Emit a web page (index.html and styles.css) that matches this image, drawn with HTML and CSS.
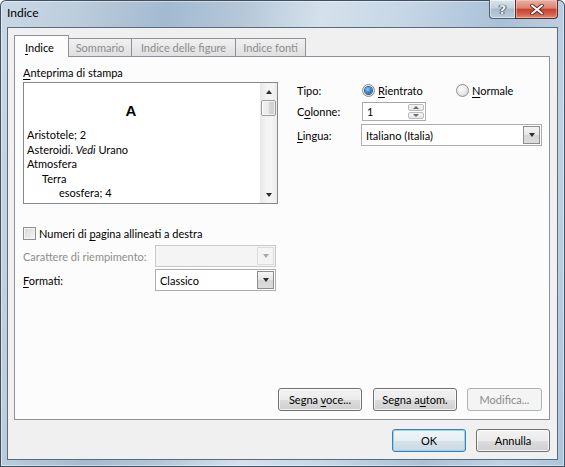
FILE: index.html
```html
<!DOCTYPE html>
<html lang="it">
<head>
<meta charset="utf-8">
<title>Indice</title>
<link rel="stylesheet" href="styles.css">
</head>
<body>
<div class="window">
  <div class="titlebar">
    <span class="title">Indice</span>
    <div class="caption">
      <div class="cap-btn help"><span class="help-glyph">?</span></div>
      <div class="cap-btn close">
        <svg width="14" height="11" viewBox="0 0 14 11"><path d="M2 1.5 L12 9.5 M12 1.5 L2 9.5" stroke="#5a2320" stroke-width="3.6" stroke-linecap="round"/><path d="M2 1.5 L12 9.5 M12 1.5 L2 9.5" stroke="#ffffff" stroke-width="2" stroke-linecap="round"/></svg>
      </div>
    </div>
  </div>
  <div class="client">
    <div class="tabs">
      <div class="tab active"><span><u>I</u>ndice</span></div>
      <div class="tab t-som"><span>Sommario</span></div>
      <div class="tab t-fig"><span>Indice delle figure</span></div>
      <div class="tab t-fon"><span>Indice fonti</span></div>
    </div>
    <div class="panel">
      <div class="upper">
        <div class="preview-col">
          <div class="label"><u>A</u>nteprima di stampa</div>
          <div class="preview">
            <div class="page">
              <div class="letter">A</div>
              <div class="entry">Aristotele; 2</div>
              <div class="entry">Asteroidi. <i>Vedi</i> Urano</div>
              <div class="entry">Atmosfera</div>
              <div class="entry l2">Terra</div>
              <div class="entry l3">esosfera; 4</div>
            </div>
            <div class="vscroll">
              <div class="sarrow"><span class="tri-up"></span></div>
              <div class="thumb"></div>
              <div class="track"></div>
              <div class="sarrow"><span class="tri-down"></span></div>
            </div>
          </div>
        </div>
        <div class="options">
          <div class="opt-row tipo">
            <span class="opt-label">Tipo:</span>
            <span class="radio r1"><span class="radio-dot checked"></span><span><u>R</u>ientrato</span></span>
            <span class="radio"><span class="radio-dot"></span><span><u>N</u>ormale</span></span>
          </div>
          <div class="opt-row colonne">
            <span class="opt-label">C<u>o</u>lonne:</span>
            <div class="spinner">
              <span class="spin-value">1</span>
              <div class="spin-btns">
                <span class="spin"><span class="tri-up small"></span></span>
                <span class="spin"><span class="tri-down small"></span></span>
              </div>
            </div>
          </div>
          <div class="opt-row lingua">
            <span class="opt-label"><u>L</u>ingua:</span>
            <div class="combo wide"><span class="combo-value">Italiano (Italia)</span><span class="drop"><span class="tri-down"></span></span></div>
          </div>
        </div>
      </div>
      <div class="lower">
        <div class="check-row"><span class="checkbox"></span><span>Numeri di <u>p</u>agina allineati a destra</span></div>
        <div class="field-row">
          <span class="field-label disabled">Carattere di riempimento:</span>
          <div class="combo short disabled-combo"><span class="combo-value"></span><span class="drop"><span class="tri-down"></span></span></div>
        </div>
        <div class="field-row formati">
          <span class="field-label"><u>F</u>ormati:</span>
          <div class="combo short"><span class="combo-value">Classico</span><span class="drop"><span class="tri-down"></span></span></div>
        </div>
      </div>
      <div class="actions">
        <div class="btn b-voce" role="button"><span>Segna <u>v</u>oce...</span></div>
        <div class="btn b-autom" role="button"><span>Segna a<u>u</u>tom.</span></div>
        <div class="btn b-mod disabled" role="button" aria-disabled="true"><span>Modifica...</span></div>
      </div>
    </div>
    <div class="footer">
      <div class="btn default" role="button"><span>OK</span></div>
      <div class="btn" role="button"><span>Annulla</span></div>
    </div>
  </div>
</div>
</body>
</html>
```

FILE: styles.css
```css
* { box-sizing: border-box; }
html, body { margin: 0; padding: 0; }
body {
  width: 565px;
  height: 467px;
  overflow: hidden;
  font-family: Lato, "Open Sans", sans-serif;
  font-size: 11px;
  font-weight: 400;
  color: #000;
  background: #fff;
}
u { text-decoration: underline; text-underline-offset: 2px; }

.window {
  width: 565px;
  height: 467px;
  display: flex;
  flex-direction: column;
  padding: 0 7px 7px 7px;
  border-radius: 6px 6px 0 0;
  box-shadow: inset 0 0 0 1px #3f5062, inset 0 0 0 2px rgba(255,255,255,0.45);
  background:
    linear-gradient(100deg, #c9d8e5 0%, #bccddc 12%, #a3bacf 26%, #b5c8d9 38%, #d4e1ec 50%, #c7d7e6 62%, #a9c1d7 78%, #bed2e5 90%, #abc5de 100%);
}

.titlebar {
  height: 27px;
  display: flex;
  justify-content: space-between;
  align-items: flex-start;
  flex: none;
}
.title {
  padding-top: 5px;
  font-size: 12px;
  line-height: 15px;
  color: #000;
}
.caption { display: flex; }
.cap-btn {
  height: 19px;
  display: flex;
  align-items: center;
  justify-content: center;
  border: 1px solid #4d5d6e;
  border-top: none;
}
.help {
  width: 26px;
  border-radius: 0 0 0 4px;
  border-right: none;
  background: linear-gradient(#d9e3ec 0%, #c3d1de 45%, #a9bccd 50%, #b9cbdb 100%);
  box-shadow: inset 0 0 0 1px rgba(255,255,255,0.5);
}
.help-glyph {
  font-family: "DejaVu Sans", sans-serif;
  font-weight: bold;
  font-size: 13px;
  color: #e9eef3;
  text-shadow: 0 0 1px #3c4c5c, 0 0 1px #3c4c5c, 1px 0 0 #56687a, -1px 0 0 #56687a;
  line-height: 1;
}
.close {
  width: 43px;
  border-radius: 0 0 4px 0;
  border-color: #5d2a28;
  background: linear-gradient(#eab0a4 0%, #d98473 45%, #c8412f 52%, #d4624c 80%, #e08d72 100%);
  box-shadow: inset 0 0 0 1px rgba(255,220,210,0.45);
}

.client {
  flex: 1;
  display: flex;
  flex-direction: column;
  background: #f0f0f0;
  border: 1px solid #5c6b7a;
}

.tabs {
  display: flex;
  align-items: flex-end;
  height: 28px;
  padding: 7px 0 0 6px;
  flex: none;
}
.tab {
  height: 18px;
  border: 1px solid #8e9199;
  border-bottom: none;
  margin-left: -1px;
  display: flex;
  align-items: center;
  justify-content: center;
  color: #8d8d8d;
  background: linear-gradient(#f0f0f0, #e0e0e0);
  line-height: 15px;
  white-space: nowrap;
}
.tab.active {
  margin-left: 0;
  height: 22px;
  width: 55px;
  margin-bottom: -1px;
  position: relative;
  z-index: 1;
  color: #000;
  background: #fcfcfc;
  justify-content: flex-start;
  padding-left: 10px;
  padding-top: 1px;
}
.t-som { width: 64px; }
.t-fig { width: 105px; }
.t-fon { width: 71px; }

.panel {
  width: 536px;
  height: 364px;
  margin-left: 6px;
  flex: none;
  border: 1px solid #8e9199;
  background: #fcfcfc;
  display: flex;
  flex-direction: column;
  padding: 8px 7px 8px 8px;
}

.upper { display: flex; }
.preview-col { width: 255px; flex: none; }
.label { line-height: 15px; height: 16px; }
.preview {
  margin-top: 1px;
  height: 122px;
  border: 1px solid #828790;
  background: #fff;
  display: flex;
}
.page {
  flex: 1;
  padding: 19px 0 0 3px;
  line-height: 14.5px;
}
.letter {
  font-family: "Liberation Sans", Arial, sans-serif;
  font-weight: bold;
  font-size: 15px;
  line-height: 17px;
  text-align: center;
  padding-right: 25px;
  margin-bottom: 9px;
}
.entry { white-space: nowrap; }
.l2 { padding-left: 15px; }
.l3 { padding-left: 32px; }

.vscroll {
  width: 17px;
  flex: none;
  display: flex;
  flex-direction: column;
  background: linear-gradient(90deg, #e8e8e8, #f4f4f4 40%, #f4f4f4 70%, #ebebeb);
}
.sarrow {
  height: 17px;
  display: flex;
  align-items: center;
  justify-content: center;
}
.thumb {
  height: 16px;
  margin: 0 1px;
  border: 1px solid #9b9b9b;
  border-radius: 2px;
  background: linear-gradient(90deg, #f3f3f3, #e8e8e8 50%, #d6d6d6 51%, #cfcfcf);
  box-shadow: inset 0 0 0 1px rgba(255,255,255,0.7);
}
.track { flex: 1; }

.tri-up, .tri-down {
  width: 0; height: 0;
  border-left: 3.5px solid transparent;
  border-right: 3.5px solid transparent;
}
.tri-up { border-bottom: 4px solid #2c2c2c; }
.tri-down { border-top: 4px solid #2c2c2c; }
.tri-up.small, .tri-down.small {
  border-left-width: 3px;
  border-right-width: 3px;
}
.tri-up.small { border-bottom: 3px solid #6b6b6b; }
.tri-down.small { border-top: 3px solid #6b6b6b; }

.options {
  margin-left: 19px;
  padding-top: 17px;
  flex: 1;
}
.opt-row { display: flex; align-items: center; }
.opt-label { width: 65px; flex: none; }
.tipo { height: 16px; }
.radio { display: flex; align-items: center; gap: 3px; }
.r1 { width: 94px; }
.radio-dot {
  width: 13px; height: 13px;
  border-radius: 50%;
  border: 1px solid #8e8f8f;
  background: radial-gradient(circle at 40% 35%, #ffffff, #e4e4e4 60%, #c9c9c9);
  display: flex;
  align-items: center;
  justify-content: center;
}
.radio-dot.checked::after {
  content: "";
  width: 7px; height: 7px;
  border-radius: 50%;
  background: radial-gradient(circle at 40% 35%, #8fd0f5, #2a7bc5 55%, #1b4e8a);
  box-shadow: 0 0 0 1px #2f5d8e;
}
.colonne { margin-top: 3px; height: 20px; }
.spinner {
  width: 64px; height: 19px;
  border: 1px solid #abadb3;
  border-top-color: #a4a6ac;
  background: #fff;
  display: flex;
  align-items: center;
  justify-content: space-between;
  padding: 1px;
}
.spin-value { padding-left: 3px; }
.spin-btns {
  width: 16px; height: 15px;
  display: flex;
  flex-direction: column;
  gap: 1px;
}
.spin {
  flex: 1;
  border: 1px solid #bcbcbc;
  border-radius: 2px;
  background: linear-gradient(#f7f7f7, #e6e6e6);
  display: flex;
  align-items: center;
  justify-content: center;
}
.lingua { margin-top: 3px; }
.combo {
  height: 22px;
  border: 1px solid #abadb3;
  background: #fff;
  display: flex;
  align-items: center;
  justify-content: space-between;
  padding: 1px;
}
.combo.wide { width: 181px; margin-left: -1px; }
.combo.short { width: 121px; }
.combo-value { padding-left: 3px; }
.drop {
  width: 17px; height: 18px;
  border: 1px solid #8d8d8d;
  background: linear-gradient(#f5f5f5, #e5e5e5 50%, #d6d6d6 51%, #dcdcdc);
  display: flex;
  align-items: center;
  justify-content: center;
}
.disabled-combo { background: #f4f4f4; border-color: #c9c9c9; }
.disabled-combo .drop { border-color: #dcdcdc; background: #f4f4f4; }
.disabled-combo .tri-down { border-top-color: #a8a8a8; }

.lower { margin-top: 22px; }
.check-row { display: flex; align-items: center; gap: 3px; height: 15px; }
.checkbox {
  width: 13px; height: 13px;
  border: 1px solid #8e8f8f;
  background: linear-gradient(135deg, #d8d8d8, #f5f5f5);
  box-shadow: inset 0 0 0 1px #f4f4f4;
}
.field-row { display: flex; align-items: center; margin-top: 4px; }
.field-row.formati { margin-top: 2px; }
.field-label { width: 132px; flex: none; white-space: nowrap; }
.field-label.disabled { color: #8d8d8d; }

.actions {
  margin-top: auto;
  display: flex;
  justify-content: flex-end;
  gap: 11px;
}

.btn {
  height: 23px;
  border: 1px solid #707070;
  border-radius: 3px;
  background: linear-gradient(#f2f2f2 0%, #ebebeb 50%, #dddddd 51%, #cfcfcf 100%);
  box-shadow: inset 0 0 0 1px rgba(255,255,255,0.75);
  display: flex;
  align-items: center;
  justify-content: center;
  line-height: 15px;
  white-space: nowrap;
  cursor: default;
}
.b-voce, .b-autom { width: 84px; }
.b-mod { width: 75px; margin-left: -1px; }
.btn.disabled {
  color: #8b8b8b;
  border-color: #adb2b5;
  background: #f4f4f4;
  box-shadow: none;
}

.footer {
  margin-top: 9px;
  padding-right: 7px;
  display: flex;
  justify-content: flex-end;
  gap: 10px;
}
.footer .btn { width: 74px; }
.btn.default {
  border-color: #3c7fb1;
  background: linear-gradient(#f1f5f8 0%, #e7eef3 50%, #d6e2ea 51%, #cad9e3 100%);
  box-shadow: inset 0 0 0 1px #8fd7f5;
}
```
